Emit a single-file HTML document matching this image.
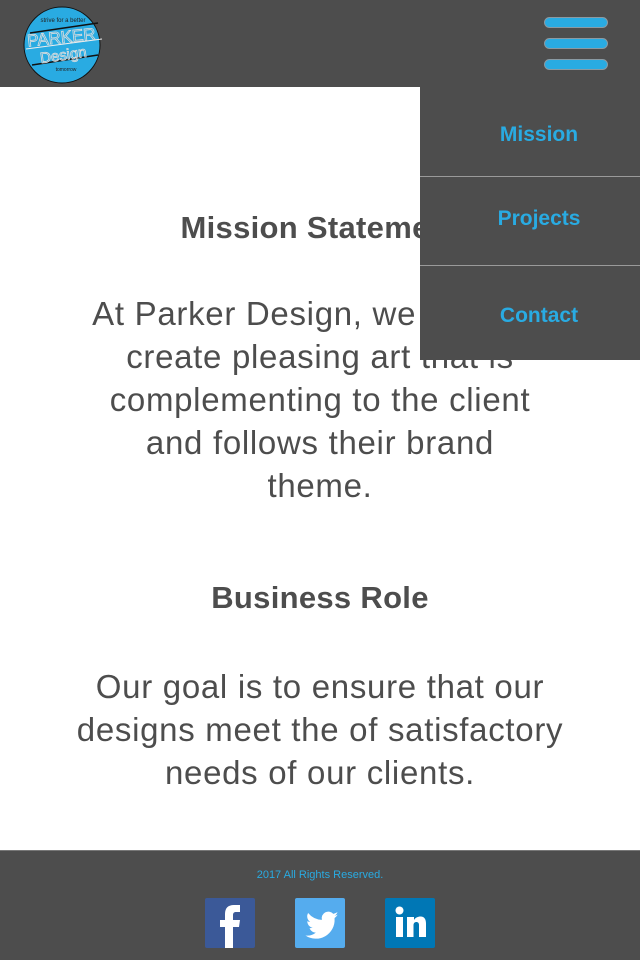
<!DOCTYPE html>
<html><head><meta charset="utf-8"><style>
*{margin:0;padding:0;box-sizing:border-box}
body{width:640px;height:960px;overflow:hidden;background:#fff;font-family:"Liberation Sans",sans-serif;position:relative;color:#4d4d4d}
.hdr{position:absolute;left:0;top:0;width:640px;height:87px;background:#4d4d4d}
.bar{position:absolute;left:544px;width:64px;height:11px;border-radius:6px;background:#29abe2;border:1px solid #8a9aa3}
.menu{position:absolute;left:420px;top:87px;width:220px;height:273px;background:#4d4d4d}
.mi{position:absolute;left:0;width:220px;padding-left:18px;text-align:center;color:#29abe2;font-weight:bold;font-size:21px}
.sep{position:absolute;left:0;width:220px;height:1px;background:#9a9a9a}
.t{position:absolute;left:0;width:640px;text-align:center;white-space:nowrap}
h2.t{font-size:31px;font-weight:bold;letter-spacing:0.3px}
p.t{font-size:33px;line-height:43px;letter-spacing:0.7px}
.ftr{position:absolute;left:0;top:850px;width:640px;height:110px;background:#4d4d4d;border-top:1px solid #777}
.ic{position:absolute;top:898px;width:50px;height:50px;border-radius:2px;overflow:hidden}
</style></head><body>
<div class="hdr">
<svg style="position:absolute;left:22px;top:5px" width="82" height="80" viewBox="0 0 82 80">
<ellipse cx="40" cy="40" rx="38" ry="38" fill="#29abe2" stroke="#111" stroke-width="1"/>
<line x1="8" y1="28" x2="76" y2="18" stroke="#111" stroke-width="1.5"/>
<line x1="4" y1="44" x2="80" y2="34" stroke="#eee" stroke-width="1"/>
<line x1="10" y1="60" x2="76" y2="50" stroke="#111" stroke-width="1.5"/>
<text x="41" y="17" font-size="6" fill="#222" text-anchor="middle" font-family="Liberation Sans">strive for a better</text>
<text x="40" y="38" font-size="17" fill="none" stroke="#ddd" stroke-width="0.8" text-anchor="middle" font-family="Liberation Sans" transform="rotate(-6 40 38)">PARKER</text>
<text x="42" y="55" font-size="15" fill="none" stroke="#ddd" stroke-width="0.8" text-anchor="middle" font-family="Liberation Sans" transform="rotate(-8 42 55)">Design</text>
<text x="44" y="66" font-size="5" fill="#222" text-anchor="middle" font-family="Liberation Sans">tomorrow</text>
</svg>
<div class="bar" style="top:17px"></div>
<div class="bar" style="top:38px"></div>
<div class="bar" style="top:59px"></div>
</div>

<h2 class="t" style="top:210px">Mission Statement</h2>
<p class="t" style="top:292px">At Parker Design, we strive to<br>create pleasing art that is<br>complementing to the client<br>and follows their brand<br>theme.</p>
<h2 class="t" style="top:580px">Business Role</h2>
<p class="t" style="top:665px">Our goal is to ensure that our<br>designs meet the of satisfactory<br>needs of our clients.</p>

<div class="menu">
<div class="mi" style="top:36px">Mission</div>
<div class="sep" style="top:89px"></div>
<div class="mi" style="top:120px">Projects</div>
<div class="sep" style="top:178px"></div>
<div class="mi" style="top:217px">Contact</div>
</div>

<div class="ftr"><div style="position:absolute;top:18px;width:640px;text-align:center;color:#29abe2;font-size:11px">2017 All Rights Reserved.</div></div>
<div class="ic" style="left:205px;background:#3b5998"><svg width="50" height="50"><path d="M20 50V29h-5v-7h5v-6c0-6 3-9 9-9h6v7h-4c-2 0-3 1-3 3v5h7l-1 7h-6v21z" fill="#fff"/></svg></div>
<div class="ic" style="left:295px;background:#55acee"><svg width="50" height="50" viewBox="0 0 24 24"><path d="M19 8.5c.7-.4 1.2-1 1.4-1.7-.6.4-1.3.6-2 .8a3.2 3.2 0 0 0-5.5 2.9 9 9 0 0 1-6.6-3.3 3.2 3.2 0 0 0 1 4.3c-.5 0-1-.2-1.4-.4 0 1.6 1.1 2.9 2.6 3.2-.5.1-1 .2-1.5.1.4 1.3 1.6 2.2 3 2.2A6.5 6.5 0 0 1 5 18a9 9 0 0 0 14-8v-.4c.6-.4 1.1-1 1.5-1.6-.5.3-1 .4-1.5.5z" fill="#fff"/></svg></div>
<div class="ic" style="left:385px;background:#0077b5"><svg width="50" height="50"><rect x="11" y="19" width="7" height="20" fill="#fff"/><circle cx="14.5" cy="12.5" r="4" fill="#fff"/><path d="M22 19h7v3c1.5-2.5 4-3.5 6.5-3.5 4 0 5.5 3 5.5 7V39h-7V27c0-2-1-3-2.7-3-2 0-2.8 1.5-2.8 3.5V39h-6.5z" fill="#fff"/></svg></div>
</body></html>
